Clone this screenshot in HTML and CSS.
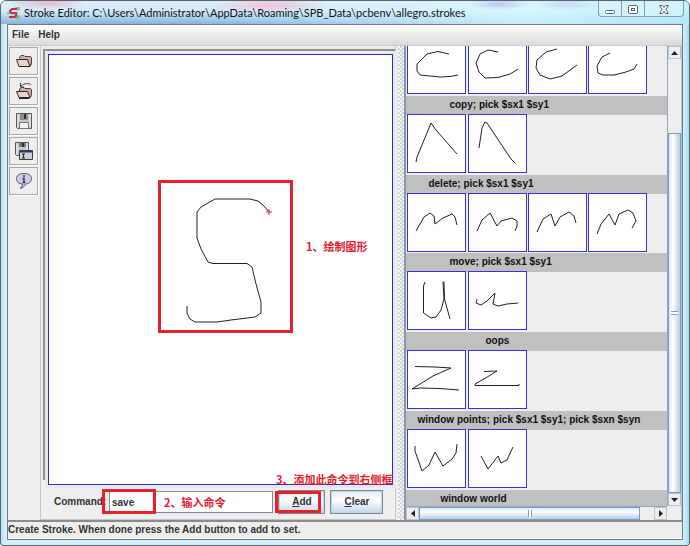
FILE: index.html
```html
<!DOCTYPE html>
<html lang="en">
<head>
<meta charset="utf-8">
<title>Stroke Editor</title>
<link rel="stylesheet" href="styles.css">
</head>
<body>
<div class="window">
  <header class="titlebar">
    <svg class="app-icon" width="14" height="14" viewBox="0 0 14 14"><path d="M8 1h5v3l-3 1zM9 8l4 2v3H8z" fill="#8fb59a"/><path d="M10 3H5L3 5l1 2h5v3l-2 1H2" fill="none" stroke="#d42a35" stroke-width="2"/><path d="M0 7h4M8 7h3" stroke="#3a9b58" stroke-width="1"/></svg>
    <h1 class="title">Stroke Editor: C:\Users\Administrator\AppData\Roaming\SPB_Data\pcbenv\allegro.strokes</h1>
    <div class="window-buttons">
      <button class="window-button" aria-label="Minimize"><svg width="12" height="12" viewBox="0 0 12 12"><rect x="1.500" y="7.500" width="9" height="3" rx="1" fill="#fff" stroke="#59636e"/></svg></button>
      <button class="window-button" aria-label="Maximize"><svg width="12" height="12" viewBox="0 0 12 12"><rect x="1.500" y="2.500" width="9" height="8" rx="1" fill="#fff" stroke="#59636e"/><rect x="4.500" y="5.500" width="3" height="2" fill="#fff" stroke="#59636e"/></svg></button>
      <button class="window-button close" aria-label="Close"><svg width="12" height="12" viewBox="0 0 12 12"><path d="M1.500 2.500h3L6 4.500l1.500-2h3L8 6.500l2.500 4h-3L6 8.500l-1.500 2h-3L4 6.500z" fill="#fff" stroke="#59636e"/></svg></button>
    </div>
  </header>

  <div class="client">
    <nav class="menubar">
      <button class="menu">File</button>
      <button class="menu">Help</button>
    </nav>

    <main class="workspace">
      <div class="toolbar">
        <button class="tool" aria-label="Open"><svg width="18" height="18" viewBox="0 0 18 18"><path d="M4.500 6.500V5L6 3.500h3l1 1h5.500l1 1V12l-2 2.500" fill="#c9aea0" stroke="#4a403c"/><path d="M1.500 7.500h11l2.500 7H4z" fill="#e9d3c5" stroke="#2e2927"/><path d="M4 14.500h10l2-2" fill="none" stroke="#222"/></svg></button>
        <button class="tool" aria-label="Reopen"><svg width="18" height="18" viewBox="0 0 18 18"><path d="M4.500 9.500V7L6 5.500h3l1 1h5.500l1 1V13l-2 2.500" fill="#c9aea0" stroke="#4a403c"/><path d="M1.500 9.500h11l2.500 6H4z" fill="#e9d3c5" stroke="#2e2927"/><path d="M4 16.500h10l2-2" fill="none" stroke="#222"/><path d="M16 3c-1-2-7-2-10 1M5.500 1v4H9" fill="none" stroke="#444"/></svg></button>
        <button class="tool" aria-label="Save"><svg width="18" height="18" viewBox="0 0 18 18"><path d="M1.500 1.500h15v15h-14l-1-1z" fill="#c9c9cb" stroke="#555"/><path d="M5 2h8v6H5z" fill="#8c8c90"/><path d="M9 2h2v5H9z" fill="#303030"/><path d="M4.500 10.500h9v6h-9z" fill="#f5f5f5" stroke="#777"/><path d="M3 2v13M15 2v13" stroke="#f4f4f4"/></svg></button>
        <button class="tool" aria-label="Save as"><svg width="18" height="18" viewBox="0 0 18 18"><path d="M.5.500h13v13h-12l-1-1z" fill="#c9c9cb" stroke="#555"/><path d="M4 1h7v4H4z" fill="#77777c"/><path d="M7 1h2v4H7z" fill="#303030"/><path d="M2 1v11M12 1v7" stroke="#f4f4f4"/><path d="M4.500 8.500h13v9h-13z" fill="#cfd0d8" stroke="#363c4a"/><path d="M5 9.500h12" stroke="#283a6a" stroke-width="2"/><path d="M7 12h3M7 16h3M8.500 12v4" stroke="#222"/></svg></button>
        <button class="tool" aria-label="Info"><svg width="18" height="18" viewBox="0 0 18 18"><path d="M9 1.500c5 0 7.500 2 7.500 5s-2.500 5.500-6 5.500c-.5 2-2.500 4-5.500 4.500 2-1.500 2.500-3 2.500-4.500-4 0-6-2.500-6-5.500s2.500-5 7.500-5z" fill="#cdcde4" stroke="#555568"/><path d="M9 3v2M7.500 6.500H9V10M7.500 10.500h3" fill="none" stroke="#34346a" stroke-width="1.500"/></svg></button>
      </div>

      <section class="editor">
        <div class="canvas">
          <svg class="drawing" width="135" height="153" viewBox="158 180 135 153"><path d="M269 212L264 206L258 201L250 199H215L201 207L197 212V238L201 249L208 262L213 263.500H247L252 267L256 284L261 302V313L255 317L231 320L217 322H195L190 319L187 313V306" fill="none" stroke="#222"/><path d="M266 212h6M269 209v6" stroke="#e8202c"/></svg>
          <p class="note note-draw">1、绘制图形</p>
          <p class="note note-add">3、添加此命令到右侧框</p>
        </div>
        <form class="command-row">
          <label class="command-label" for="command">Command:</label>
          <div class="field">
            <input class="command-input" id="command" type="text" value="save">
            <span class="mark mark-input"></span>
            <p class="note note-type">2、输入命令</p>
          </div>
          <div class="field-button">
            <button class="action" type="button"><u>A</u>dd</button>
            <span class="mark mark-button"></span>
          </div>
          <button class="action clear" type="button"><u>C</u>lear</button>
        </form>
      </section>

      <div class="splitter"></div>

      <section class="library">
        <div class="viewport">
          <div class="groups">
            <div class="group">
              <div class="samples">
                <svg class="sample" viewBox="1 1 57 57"><path d="M42 19L31 16.500L20 19L10 29V36L13 40L33 42L43 41.500L51 40"/></svg>
                <svg class="sample" viewBox="1 1 57 57"><path d="M30 17L20 15L12 19L8 28L11 37L17 43L30 42.500L42 39L50 34"/></svg>
                <svg class="sample" viewBox="1 1 57 57"><path d="M29 14L18 17L9 25L8 33L12 40L22 44L34 41L49 30"/></svg>
                <svg class="sample" viewBox="1 1 57 57"><path d="M22 18L14 22L9 31L10 38L15 40H26L38 37L46 34L49 29"/></svg>
              </div>
              <p class="caption indent-4">copy; pick $sx1 $sy1</p>
            </div>
            <div class="group">
              <div class="samples">
                <svg class="sample" viewBox="1 1 57 57"><path d="M9 48L10 43L15 31L24 9L29 16L50 40"/></svg>
                <svg class="sample" viewBox="1 1 57 57"><path d="M11 34L14 14L17 8L19 9L43 45L47 49"/></svg>
              </div>
              <p class="caption indent-2">delete; pick $sx1 $sy1</p>
            </div>
            <div class="group">
              <div class="samples">
                <svg class="sample" viewBox="1 1 57 57"><path d="M9 38L17 24L23 20L27 23L28 31L36 25L45 21L48 24L50 32"/></svg>
                <svg class="sample" viewBox="1 1 57 57"><path d="M9 38L14 27L22 20L29 33L33 28L44 25L49 28V33L47 38"/></svg>
                <svg class="sample" viewBox="1 1 57 57"><path d="M9 39L15 26L23 21L27 33L32 24L41 19L46 23L48 30"/></svg>
                <svg class="sample" viewBox="1 1 57 57"><path d="M9 41L13 31L21 21L27 32L31 21L40 17L45 20L48 28L44 35"/></svg>
              </div>
              <p class="caption indent-4">move; pick $sx1 $sy1</p>
            </div>
            <div class="group">
              <div class="samples">
                <svg class="sample" viewBox="1 1 57 57"><path d="M18 11L16.500 15V42L24 47L29 46L34 39L37 28L36 11L37 11L37.500 28L43 48"/></svg>
                <svg class="sample" viewBox="1 1 57 57"><path d="M9 28L8 32L13 34L19 30L27 22L25 33L30 35L39 33L50 32"/></svg>
              </div>
              <p class="caption indent-5">oops</p>
            </div>
            <div class="group">
              <div class="samples">
                <svg class="sample" viewBox="1 1 57 57"><path d="M8 16.500L28 17L44 18L26 26L5 39L13 38L33 38.500L52 40"/></svg>
                <svg class="sample" viewBox="1 1 57 57"><path d="M16 21.500L29 21L21 26L7 34V35.500H51V34"/></svg>
              </div>
              <p class="caption indent-1">window points; pick $sx1 $sy1; pick $sxn $syn</p>
            </div>
            <div class="group">
              <div class="samples">
                <svg class="sample" viewBox="1 1 57 57"><path d="M8 17V22L15 42L22 36L28 23L36 37L45 30L49 24L50 15"/></svg>
                <svg class="sample" viewBox="1 1 57 57"><path d="M13 27L20 40L30 27L33 34L39 31L45 18"/></svg>
              </div>
              <p class="caption indent-3">window world</p>
            </div>
          </div>
        </div>
        <div class="vscroll">
          <button class="arrow" aria-label="Scroll up"><svg width="7" height="4" viewBox="0 0 7 4"><path d="M3.500 0L7 4H0z"/></svg></button>
          <div class="track"><div class="vthumb"></div></div>
          <button class="arrow" aria-label="Scroll down"><svg width="7" height="4" viewBox="0 0 7 4"><path d="M0 0h7L3.500 4z"/></svg></button>
        </div>
        <div class="hscroll">
          <button class="arrow" aria-label="Scroll left"><svg width="4" height="7" viewBox="0 0 4 7"><path d="M4 0v7L0 3.500z"/></svg></button>
          <div class="track"><div class="hthumb"></div></div>
          <button class="arrow" aria-label="Scroll right"><svg width="4" height="7" viewBox="0 0 4 7"><path d="M0 0l4 3.500L0 7z"/></svg></button>
        </div>
      </section>
    </main>

    <footer class="status">Create Stroke. When done press the Add button to add to set.</footer>
  </div>
</div>
</body>
</html>
```
FILE: styles.css
```css
* { box-sizing: border-box; }

body, p, h1 { margin: 0; }

button { padding: 0; font: inherit; color: inherit; }

svg { display: block; }

body {
  font: bold 10px/16px "Liberation Sans", Arial, sans-serif;
  color: #333;
}

.window {
  display: flex;
  flex-direction: column;
  min-height: 100vh;
  padding: 0 6px 5px;
  border: 1px solid #59646e;
  border-radius: 6px 6px 3px 3px;
  background: linear-gradient(90deg, #b9e4f6, #d3f1fc 5px, #d3f1fc calc(100% - 6px), #a9dcef);
}

/* Title bar */
.titlebar {
  display: flex;
  align-items: center;
  gap: 3px;
  height: 23px;
  margin: 0 -6px;
  padding-left: 6px;
  border-radius: 5px 5px 0 0;
  background:
    radial-gradient(ellipse 40px 6px at 46px 2px, #e9a9bccc, transparent),
    radial-gradient(ellipse 60px 8px at 268px 4px, #f6b6cacc, transparent),
    radial-gradient(ellipse 30px 6px at 498px 3px, #b3b8efcc, transparent),
    radial-gradient(ellipse 30px 6px at 565px 3px, #c5d0f5cc, transparent),
    linear-gradient(90deg, transparent 30%, #d8f8ffcc 75%, #b8f4ffcc),
    linear-gradient(#dceef9, #d5eafa 45%, #9fc8ec 80%, #86b4df);
}

.title {
  flex: 1;
  font: 11px/16px Lato, "Open Sans", sans-serif;
  color: #111;
  white-space: nowrap;
}

.window-buttons {
  display: flex;
  align-self: flex-start;
  height: 16px;
  margin-right: 5px;
  border: 1px solid #8d9aa8;
  border-top: 0;
  border-radius: 0 0 4px 4px;
  background: #dff3fb99;
}

.window-button {
  display: grid;
  place-items: center;
  width: 23px;
  border: 0;
  border-right: 1px solid #8d9aa8;
  background: none;
}

.window-button.close { width: 38px; border-right: 0; }

/* Client area */
.client {
  display: flex;
  flex: 1;
  flex-direction: column;
  border: 1px solid #6f7b86;
  background: #eee;
}

.menubar {
  display: flex;
  gap: 9px;
  height: 21px;
  padding: 0 4px;
  border-bottom: 1px solid #ccc;
  background: linear-gradient(#fff, #dadada);
}

.menu { border: 0; background: none; }

.workspace {
  display: grid;
  flex: 1;
  grid-template-columns: 32px minmax(0, 357fr) 8px minmax(0, 278fr);
}

.toolbar {
  display: flex;
  flex-direction: column;
  gap: 2px;
  padding: 1px;
}

.tool {
  display: grid;
  place-items: center;
  width: 29px;
  height: 28px;
  border: 1px solid #aaa;
  background: #eee;
  box-shadow: 1px 1px #fff;
}

/* Drawing area */
.editor {
  display: flex;
  flex-direction: column;
  border: 1px solid #c4c4c4;
  border-top: 0;
}

.canvas {
  position: relative;
  flex: 1;
  margin: 8px 2px 0 7px;
  border: 1px solid #2a2ac0;
  outline: 3px solid #e6e9ee;
  background: #fff;
  box-shadow: -5px -5px #8f8f8f, 2px -5px #8f8f8f;
}

.drawing {
  position: absolute;
  left: 109px;
  top: 125px;
  outline: 3px solid #e8202c;
  outline-offset: -3px;
}

.note {
  position: absolute;
  font: bold 11px/14px "Noto Sans CJK SC", sans-serif;
  color: #e8202c;
  white-space: nowrap;
}

.note-draw { left: 257px; top: 184px; }

.note-add { right: 0; bottom: -2px; }

.note-type { left: 55px; top: 4px; }

.command-row {
  display: flex;
  align-items: center;
  gap: 5px;
  height: 34px;
  padding: 0 12px 0 13px;
}

.command-label { width: 50px; white-space: nowrap; }

.field { position: relative; flex: 1; }

.command-input {
  width: 100%;
  height: 22px;
  padding: 0 2px;
  border: 1px solid #7a8a99;
  background: #fff;
  font: inherit;
  color: inherit;
}

.field-button { position: relative; }

.action {
  display: block;
  width: 47px;
  height: 24px;
  border: 1px solid #7a8a99;
  background: linear-gradient(#dfe9f2, #fff 40%, #c3d6e8);
  box-shadow: inset 0 0 0 1px #c5d4e2;
}

.action.clear { width: 53px; }

.mark {
  position: absolute;
  border: 3px solid #e8202c;
  pointer-events: none;
}

.mark-input { left: -7px; top: -2px; width: 54px; height: 25px; }

.mark-button { left: -3px; top: 1px; width: 46px; height: 22px; }

.splitter {
  margin-left: 2px;
  background: repeating-conic-gradient(#d2d6dc 0 25%, #f4f4f4 0 50%) 0 0 / 4px 4px;
}

/* Stroke library */
.library {
  display: grid;
  grid-template: minmax(0, 1fr) 14px / minmax(0, 1fr) 14px;
  border-left: 2px solid #8797a7;
  border-right: 1px solid #b8c4d0;
}

.viewport { position: relative; overflow: hidden; }

/* Scrolled content: fills the viewport and runs past both of its ends */
.groups {
  position: absolute;
  inset: -10px 0 -3px;
  display: flex;
  flex-direction: column;
}

.group { display: flex; flex: 1; flex-direction: column; }

.samples {
  position: relative;
  display: grid;
  flex: 1;
  grid-template-columns: repeat(4, 59px);
  justify-content: space-between;
  width: 240px;
  margin: -1px 0 0 1px;
}

.sample {
  width: 59px;
  height: 59px;
  border: 1px solid #3a32d0;
  background: #fff;
  fill: none;
  stroke: #222;
}

.caption {
  height: 19px;
  background: #c0c0c0;
  line-height: 18px;
  color: #111;
  white-space: nowrap;
}

.indent-1 { padding-left: 11px; }
.indent-2 { padding-left: 22px; }
.indent-3 { padding-left: 34px; }
.indent-4 { padding-left: 43px; }
.indent-5 { padding-left: 79px; }

.vscroll, .hscroll { display: flex; background: #eee; }

.vscroll { flex-direction: column; border-left: 1px solid #8fa9c6; }

.hscroll { border-top: 1px solid #8fa9c6; }

.arrow {
  display: grid;
  place-items: center;
  flex: 0 0 13px;
  border: 1px solid #b8c4d0;
  background: #eee;
  fill: #222;
}

.track { display: flex; flex: 1; }

.vscroll .track { flex-direction: column; justify-content: flex-end; }

.vthumb, .hthumb { border: 1px solid #7a9cc6; }

.vthumb {
  height: 83%;
  background:
    linear-gradient(#7a9cc6 0 1px, #fff 1px 3px, #7a9cc6 3px 4px) center / 7px 4px no-repeat,
    linear-gradient(90deg, #dce8f4, #fff 35%, #b8cfe5);
}

.hthumb {
  width: 94%;
  background:
    linear-gradient(90deg, #7a9cc6 0 1px, #fff 1px 3px, #7a9cc6 3px 4px) center / 4px 7px no-repeat,
    linear-gradient(#dce8f4, #fff 35%, #b8cfe5);
}

.status {
  height: 19px;
  border-top: 2px solid #8b8b8b;
  border-bottom: 1px solid #fff;
  white-space: nowrap;
}
```
